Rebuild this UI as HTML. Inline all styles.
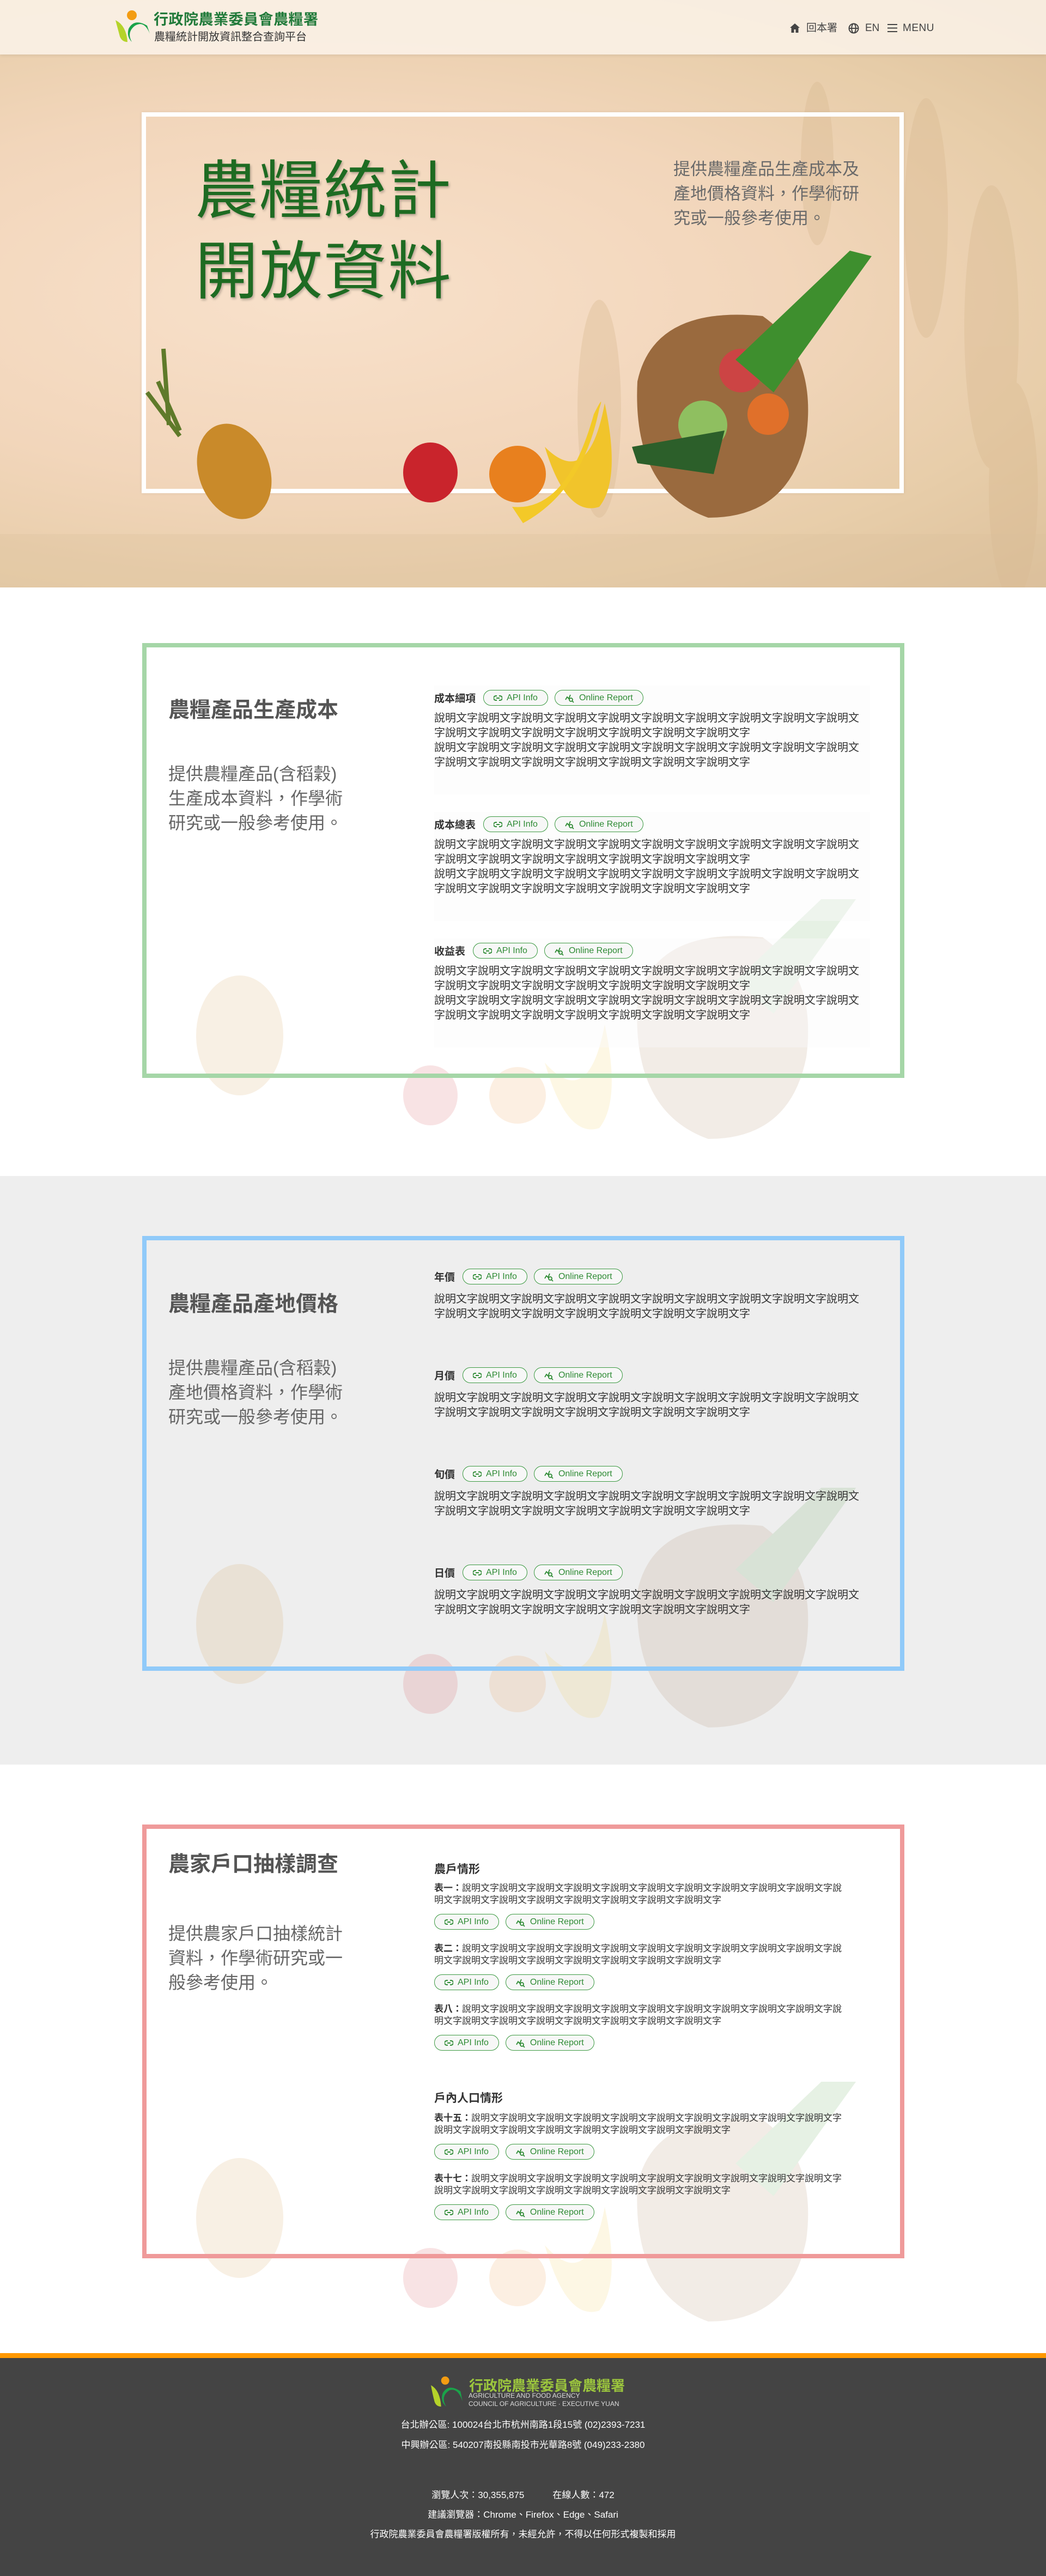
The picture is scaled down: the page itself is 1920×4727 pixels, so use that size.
<!DOCTYPE html>
<html><head><meta charset="utf-8">
<style>
*{margin:0;padding:0;box-sizing:border-box}
body{width:1920px;height:4727px;position:relative;font-family:"Liberation Sans","Noto Sans CJK TC",sans-serif;background:#fff;overflow:hidden}
.abs{position:absolute}
.hero{left:0;top:0;width:1920px;height:1078px;background:radial-gradient(ellipse at 30% 50%,#f8e1cb 0%,#f2d6bb 45%,#e7cda9 75%,#dcc09b 100%)}
.header{left:0;top:0;width:1920px;height:100px;background:rgba(252,243,234,.85);box-shadow:0 2px 6px rgba(0,0,0,.08)}
.frame{left:260px;top:206px;width:1399px;height:699px;border:8px solid #fff;box-shadow:0 0 6px rgba(0,0,0,.08)}
.htitle{left:358px;top:276px;font-size:116px;line-height:148px;color:#1e6b22;text-shadow:2px 3px 4px rgba(0,0,0,.25);letter-spacing:2px}
.hdesc{left:1236px;top:288px;font-size:31px;line-height:45px;color:#6a6a6a;width:360px}
.sec{left:0;width:1920px;height:1080px}
.box{left:261px;width:1399px;border:8px solid}
.stitle{position:absolute;left:40px;font-size:39px;font-weight:bold;color:#555}
.sdesc{position:absolute;left:40px;font-size:32px;line-height:45px;color:#666;width:330px}
.item{position:absolute;left:528px;width:800px;background:rgba(250,250,250,.4)}
.lbl{font-size:19px;font-weight:bold;color:#333;display:inline-block;vertical-align:middle;margin-right:14px}
.btn{display:inline-flex;align-items:center;height:29px;border:1.5px solid #3c9a42;border-radius:15px;color:#2e8b34;font-size:16px;padding:0 18px;vertical-align:middle;margin-right:12px;background:#f7f7f7;gap:8px;white-space:nowrap}
.txt{font-size:20px;line-height:27px;color:#333;width:780px}
.t2{font-size:17px;line-height:22px;color:#333;width:760px}
.sub{font-size:21px;font-weight:bold;color:#333}
.fade{opacity:.12}
.nav{position:absolute;top:40px;font-size:19px;color:#444;line-height:24px}
</style></head><body>

<div class="abs hero"></div>
<svg class="abs" style="left:0;top:100px" width="1920" height="978">
<g fill="#d8b88e" opacity=".35">
<ellipse cx="1700" cy="300" rx="40" ry="220"/><ellipse cx="1820" cy="500" rx="50" ry="260"/><ellipse cx="1500" cy="200" rx="30" ry="150"/><ellipse cx="1100" cy="650" rx="40" ry="200"/><ellipse cx="1860" cy="800" rx="45" ry="200"/>
</g>
<rect x="0" y="880" width="1920" height="98" fill="#d9bf9c" opacity=".3"/>
</svg>
<div class="abs frame"></div>
<div class="abs htitle">農糧統計<br>開放資料</div>
<div class="abs hdesc">提供農糧產品生產成本及產地價格資料，作學術研究或一般參考使用。</div>
<svg class="abs" style="left:0;top:0" width="1920" height="1078">
<g>
<path d="M300 640 L310 780 M290 700 L330 790 M270 720 L330 800" stroke="#5f7a2a" stroke-width="8"/>
<ellipse cx="430" cy="865" rx="65" ry="90" fill="#c98a2a" transform="rotate(-20 430 865)"/>
<ellipse cx="790" cy="867" rx="50" ry="55" fill="#c9242c"/>
<circle cx="950" cy="870" r="52" fill="#e8801e"/>
<path d="M1000 820 Q1040 950 1100 930 Q1140 880 1110 740 Q1080 900 1000 820Z" fill="#f1c42b"/>
<path d="M940 930 Q1040 940 1090 760 Q1110 720 1100 750 Q1070 900 960 960Z" fill="#f3c928"/>
<path d="M1170 700 Q1200 560 1400 580 Q1500 650 1480 800 Q1450 950 1300 950 Q1160 900 1170 700Z" fill="#9a6a3e"/>
<circle cx="1360" cy="680" r="40" fill="#c44"/><circle cx="1410" cy="760" r="38" fill="#e0702a"/><circle cx="1290" cy="780" r="45" fill="#8fbf60"/>
<path d="M1350 660 L1560 460 L1600 470 L1420 720Z" fill="#3e8f2e"/>
<path d="M1310 870 L1170 850 L1160 820 L1330 790Z" fill="#2c5f2a"/>
</g>
</svg>

<div class="abs header"></div>
<svg class="abs" style="left:210px;top:17px" width="66" height="62" viewBox="0 0 66 62">
<circle cx="32" cy="11" r="9" fill="#f39c12"/>
<path d="M2 20 Q22 30 24 60 Q14 60 10 50 Q6 35 2 20Z" fill="#b5d32a"/>
<path d="M65 45 Q55 20 38 30 Q22 42 32 60 Q22 50 26 36 Q36 16 60 30 Z" fill="#1aa34a"/>
</svg>
<div class="abs" style="left:282px;top:14px;font-size:27px;color:#217a3a;font-weight:bold;letter-spacing:.5px">行政院農業委員會農糧署</div>
<div class="abs" style="left:283px;top:51px;font-size:20px;color:#333">農糧統計開放資訊整合查詢平台</div>
<svg class="abs" style="left:1450px;top:43px" width="18" height="17" viewBox="0 0 18 17"><path d="M9 0 0 8h2.5v9h5v-6h3v6h5V8H18Z" fill="#444"/></svg>
<div class="nav" style="left:1480px">回本署</div>
<svg class="abs" style="left:1557px;top:42px" width="20" height="20" viewBox="0 0 20 20" fill="none" stroke="#444" stroke-width="2"><circle cx="10" cy="10" r="8.5"/><ellipse cx="10" cy="10" rx="3.8" ry="8.5"/><path d="M1.5 10h17"/></svg>
<div class="nav" style="left:1588px">EN</div>
<svg class="abs" style="left:1629px;top:44px" width="18" height="15" viewBox="0 0 18 15" fill="#444"><rect y="0" width="18" height="2"/><rect y="6.5" width="18" height="2"/><rect y="13" width="18" height="2"/></svg>
<div class="nav" style="left:1657px;letter-spacing:.5px">MENU</div>

<!-- SECTION 1 -->
<div class="abs sec" style="top:1078px;background:#fff"></div>
<svg class="abs fade" style="left:260px;top:1650px" width="1560" height="480">
<ellipse cx="180" cy="250" rx="80" ry="110" fill="#c98a2a"/>
<ellipse cx="530" cy="360" rx="50" ry="55" fill="#c9242c"/>
<circle cx="690" cy="360" r="52" fill="#e8801e"/>
<path d="M740 300 Q780 440 840 420 Q880 370 850 230 Q820 390 740 300Z" fill="#f1c42b"/>
<path d="M910 190 Q940 50 1140 70 Q1240 140 1220 290 Q1190 440 1040 440 Q900 390 910 190Z" fill="#9a6a3e"/>
<path d="M1090 150 L1300 -50 L1340 -40 L1160 210Z" fill="#3e8f2e"/>
</svg>
<div class="abs box" style="top:1180px;height:798px;border-color:#a5d6a7">
<div class="stitle" style="top:84px">農糧產品生產成本</div>
<div class="sdesc" style="top:210px">提供農糧產品(含稻穀)生產成本資料，作學術研究或一般參考使用。</div>
<div class="item" style="top:70px;height:200px">
<div style="margin-top:8px"><span class="lbl">成本細項</span><span class="btn"><svg width="16" height="12" viewBox="0 0 16 12" fill="none" stroke="#2e8b34" stroke-width="2"><path d="M6 2H4a4 4 0 0 0 0 8h2M10 2h2a4 4 0 0 1 0 8h-2M5 6h6"/></svg>API Info</span><span class="btn"><svg width="18" height="18" viewBox="0 0 18 18" fill="none" stroke="#2e8b34" stroke-width="1.8"><path d="M1 12 4 7 7 10 10 3"/><circle cx="11" cy="12" r="3"/><path d="M13 14l3 3"/></svg>Online Report</span></div>
<div class="txt" style="margin-top:10px">說明文字說明文字說明文字說明文字說明文字說明文字說明文字說明文字說明文字說明文字說明文字說明文字說明文字說明文字說明文字說明文字說明文字<br>說明文字說明文字說明文字說明文字說明文字說明文字說明文字說明文字說明文字說明文字說明文字說明文字說明文字說明文字說明文字說明文字說明文字</div>
</div>
<div class="item" style="top:302px;height:200px">
<div style="margin-top:8px"><span class="lbl">成本總表</span><span class="btn"><svg width="16" height="12" viewBox="0 0 16 12" fill="none" stroke="#2e8b34" stroke-width="2"><path d="M6 2H4a4 4 0 0 0 0 8h2M10 2h2a4 4 0 0 1 0 8h-2M5 6h6"/></svg>API Info</span><span class="btn"><svg width="18" height="18" viewBox="0 0 18 18" fill="none" stroke="#2e8b34" stroke-width="1.8"><path d="M1 12 4 7 7 10 10 3"/><circle cx="11" cy="12" r="3"/><path d="M13 14l3 3"/></svg>Online Report</span></div>
<div class="txt" style="margin-top:10px">說明文字說明文字說明文字說明文字說明文字說明文字說明文字說明文字說明文字說明文字說明文字說明文字說明文字說明文字說明文字說明文字說明文字<br>說明文字說明文字說明文字說明文字說明文字說明文字說明文字說明文字說明文字說明文字說明文字說明文字說明文字說明文字說明文字說明文字說明文字</div>
</div>
<div class="item" style="top:534px;height:200px">
<div style="margin-top:8px"><span class="lbl">收益表</span><span class="btn"><svg width="16" height="12" viewBox="0 0 16 12" fill="none" stroke="#2e8b34" stroke-width="2"><path d="M6 2H4a4 4 0 0 0 0 8h2M10 2h2a4 4 0 0 1 0 8h-2M5 6h6"/></svg>API Info</span><span class="btn"><svg width="18" height="18" viewBox="0 0 18 18" fill="none" stroke="#2e8b34" stroke-width="1.8"><path d="M1 12 4 7 7 10 10 3"/><circle cx="11" cy="12" r="3"/><path d="M13 14l3 3"/></svg>Online Report</span></div>
<div class="txt" style="margin-top:10px">說明文字說明文字說明文字說明文字說明文字說明文字說明文字說明文字說明文字說明文字說明文字說明文字說明文字說明文字說明文字說明文字說明文字<br>說明文字說明文字說明文字說明文字說明文字說明文字說明文字說明文字說明文字說明文字說明文字說明文字說明文字說明文字說明文字說明文字說明文字</div>
</div>
</div>

<!-- SECTION 2 -->
<div class="abs sec" style="top:2158px;background:#eeeeee"></div>
<svg class="abs fade" style="left:260px;top:2730px" width="1560" height="480">
<ellipse cx="180" cy="250" rx="80" ry="110" fill="#c98a2a"/>
<ellipse cx="530" cy="360" rx="50" ry="55" fill="#c9242c"/>
<circle cx="690" cy="360" r="52" fill="#e8801e"/>
<path d="M740 300 Q780 440 840 420 Q880 370 850 230 Q820 390 740 300Z" fill="#f1c42b"/>
<path d="M910 190 Q940 50 1140 70 Q1240 140 1220 290 Q1190 440 1040 440 Q900 390 910 190Z" fill="#9a6a3e"/>
<path d="M1090 150 L1300 -50 L1340 -40 L1160 210Z" fill="#3e8f2e"/>
</svg>
<div class="abs box" style="top:2268px;height:798px;border-color:#90caf9">
<div class="stitle" style="top:86px">農糧產品產地價格</div>
<div class="sdesc" style="top:212px">提供農糧產品(含稻穀)產地價格資料，作學術研究或一般參考使用。</div>
<div class="item" style="top:52px;background:transparent">
<div><span class="lbl">年價</span><span class="btn"><svg width="16" height="12" viewBox="0 0 16 12" fill="none" stroke="#2e8b34" stroke-width="2"><path d="M6 2H4a4 4 0 0 0 0 8h2M10 2h2a4 4 0 0 1 0 8h-2M5 6h6"/></svg>API Info</span><span class="btn"><svg width="18" height="18" viewBox="0 0 18 18" fill="none" stroke="#2e8b34" stroke-width="1.8"><path d="M1 12 4 7 7 10 10 3"/><circle cx="11" cy="12" r="3"/><path d="M13 14l3 3"/></svg>Online Report</span></div>
<div class="txt" style="margin-top:14px">說明文字說明文字說明文字說明文字說明文字說明文字說明文字說明文字說明文字說明文字說明文字說明文字說明文字說明文字說明文字說明文字說明文字</div>
</div>
<div class="item" style="top:233px;background:transparent">
<div><span class="lbl">月價</span><span class="btn"><svg width="16" height="12" viewBox="0 0 16 12" fill="none" stroke="#2e8b34" stroke-width="2"><path d="M6 2H4a4 4 0 0 0 0 8h2M10 2h2a4 4 0 0 1 0 8h-2M5 6h6"/></svg>API Info</span><span class="btn"><svg width="18" height="18" viewBox="0 0 18 18" fill="none" stroke="#2e8b34" stroke-width="1.8"><path d="M1 12 4 7 7 10 10 3"/><circle cx="11" cy="12" r="3"/><path d="M13 14l3 3"/></svg>Online Report</span></div>
<div class="txt" style="margin-top:14px">說明文字說明文字說明文字說明文字說明文字說明文字說明文字說明文字說明文字說明文字說明文字說明文字說明文字說明文字說明文字說明文字說明文字</div>
</div>
<div class="item" style="top:414px;background:transparent">
<div><span class="lbl">旬價</span><span class="btn"><svg width="16" height="12" viewBox="0 0 16 12" fill="none" stroke="#2e8b34" stroke-width="2"><path d="M6 2H4a4 4 0 0 0 0 8h2M10 2h2a4 4 0 0 1 0 8h-2M5 6h6"/></svg>API Info</span><span class="btn"><svg width="18" height="18" viewBox="0 0 18 18" fill="none" stroke="#2e8b34" stroke-width="1.8"><path d="M1 12 4 7 7 10 10 3"/><circle cx="11" cy="12" r="3"/><path d="M13 14l3 3"/></svg>Online Report</span></div>
<div class="txt" style="margin-top:14px">說明文字說明文字說明文字說明文字說明文字說明文字說明文字說明文字說明文字說明文字說明文字說明文字說明文字說明文字說明文字說明文字說明文字</div>
</div>
<div class="item" style="top:595px;background:transparent">
<div><span class="lbl">日價</span><span class="btn"><svg width="16" height="12" viewBox="0 0 16 12" fill="none" stroke="#2e8b34" stroke-width="2"><path d="M6 2H4a4 4 0 0 0 0 8h2M10 2h2a4 4 0 0 1 0 8h-2M5 6h6"/></svg>API Info</span><span class="btn"><svg width="18" height="18" viewBox="0 0 18 18" fill="none" stroke="#2e8b34" stroke-width="1.8"><path d="M1 12 4 7 7 10 10 3"/><circle cx="11" cy="12" r="3"/><path d="M13 14l3 3"/></svg>Online Report</span></div>
<div class="txt" style="margin-top:14px">說明文字說明文字說明文字說明文字說明文字說明文字說明文字說明文字說明文字說明文字說明文字說明文字說明文字說明文字說明文字說明文字說明文字</div>
</div>
</div>

<!-- SECTION 3 -->
<div class="abs sec" style="top:3238px;height:1078px;background:#fff"></div>
<svg class="abs fade" style="left:260px;top:3820px" width="1560" height="480">
<ellipse cx="180" cy="250" rx="80" ry="110" fill="#c98a2a"/>
<ellipse cx="530" cy="360" rx="50" ry="55" fill="#c9242c"/>
<circle cx="690" cy="360" r="52" fill="#e8801e"/>
<path d="M740 300 Q780 440 840 420 Q880 370 850 230 Q820 390 740 300Z" fill="#f1c42b"/>
<path d="M910 190 Q940 50 1140 70 Q1240 140 1220 290 Q1190 440 1040 440 Q900 390 910 190Z" fill="#9a6a3e"/>
<path d="M1090 150 L1300 -50 L1340 -40 L1160 210Z" fill="#3e8f2e"/>
</svg>
<div class="abs box" style="top:3348px;height:796px;border-color:#ef9a9a">
<div class="stitle" style="top:34px">農家戶口抽樣調查</div>
<div class="sdesc" style="top:170px">提供農家戶口抽樣統計資料，作學術研究或一般參考使用。</div>
<div class="item" style="top:58px;background:transparent">
<div class="sub">農戶情形</div>
<div class="t2" style="margin-top:10px"><b>表一：</b>說明文字說明文字說明文字說明文字說明文字說明文字說明文字說明文字說明文字說明文字說明文字說明文字說明文字說明文字說明文字說明文字說明文字說明文字</div>
<div style="margin-top:14px"><span class="btn"><svg width="16" height="12" viewBox="0 0 16 12" fill="none" stroke="#2e8b34" stroke-width="2"><path d="M6 2H4a4 4 0 0 0 0 8h2M10 2h2a4 4 0 0 1 0 8h-2M5 6h6"/></svg>API Info</span><span class="btn"><svg width="18" height="18" viewBox="0 0 18 18" fill="none" stroke="#2e8b34" stroke-width="1.8"><path d="M1 12 4 7 7 10 10 3"/><circle cx="11" cy="12" r="3"/><path d="M13 14l3 3"/></svg>Online Report</span></div>
<div class="t2" style="margin-top:24px"><b>表二：</b>說明文字說明文字說明文字說明文字說明文字說明文字說明文字說明文字說明文字說明文字說明文字說明文字說明文字說明文字說明文字說明文字說明文字說明文字</div>
<div style="margin-top:14px"><span class="btn"><svg width="16" height="12" viewBox="0 0 16 12" fill="none" stroke="#2e8b34" stroke-width="2"><path d="M6 2H4a4 4 0 0 0 0 8h2M10 2h2a4 4 0 0 1 0 8h-2M5 6h6"/></svg>API Info</span><span class="btn"><svg width="18" height="18" viewBox="0 0 18 18" fill="none" stroke="#2e8b34" stroke-width="1.8"><path d="M1 12 4 7 7 10 10 3"/><circle cx="11" cy="12" r="3"/><path d="M13 14l3 3"/></svg>Online Report</span></div>
<div class="t2" style="margin-top:24px"><b>表八：</b>說明文字說明文字說明文字說明文字說明文字說明文字說明文字說明文字說明文字說明文字說明文字說明文字說明文字說明文字說明文字說明文字說明文字說明文字</div>
<div style="margin-top:14px"><span class="btn"><svg width="16" height="12" viewBox="0 0 16 12" fill="none" stroke="#2e8b34" stroke-width="2"><path d="M6 2H4a4 4 0 0 0 0 8h2M10 2h2a4 4 0 0 1 0 8h-2M5 6h6"/></svg>API Info</span><span class="btn"><svg width="18" height="18" viewBox="0 0 18 18" fill="none" stroke="#2e8b34" stroke-width="1.8"><path d="M1 12 4 7 7 10 10 3"/><circle cx="11" cy="12" r="3"/><path d="M13 14l3 3"/></svg>Online Report</span></div>
</div>
<div class="item" style="top:478px;background:transparent">
<div class="sub">戶內人口情形</div>
<div class="t2" style="margin-top:12px"><b>表十五：</b>說明文字說明文字說明文字說明文字說明文字說明文字說明文字說明文字說明文字說明文字說明文字說明文字說明文字說明文字說明文字說明文字說明文字說明文字</div>
<div style="margin-top:14px"><span class="btn"><svg width="16" height="12" viewBox="0 0 16 12" fill="none" stroke="#2e8b34" stroke-width="2"><path d="M6 2H4a4 4 0 0 0 0 8h2M10 2h2a4 4 0 0 1 0 8h-2M5 6h6"/></svg>API Info</span><span class="btn"><svg width="18" height="18" viewBox="0 0 18 18" fill="none" stroke="#2e8b34" stroke-width="1.8"><path d="M1 12 4 7 7 10 10 3"/><circle cx="11" cy="12" r="3"/><path d="M13 14l3 3"/></svg>Online Report</span></div>
<div class="t2" style="margin-top:24px"><b>表十七：</b>說明文字說明文字說明文字說明文字說明文字說明文字說明文字說明文字說明文字說明文字說明文字說明文字說明文字說明文字說明文字說明文字說明文字說明文字</div>
<div style="margin-top:14px"><span class="btn"><svg width="16" height="12" viewBox="0 0 16 12" fill="none" stroke="#2e8b34" stroke-width="2"><path d="M6 2H4a4 4 0 0 0 0 8h2M10 2h2a4 4 0 0 1 0 8h-2M5 6h6"/></svg>API Info</span><span class="btn"><svg width="18" height="18" viewBox="0 0 18 18" fill="none" stroke="#2e8b34" stroke-width="1.8"><path d="M1 12 4 7 7 10 10 3"/><circle cx="11" cy="12" r="3"/><path d="M13 14l3 3"/></svg>Online Report</span></div>
</div>
</div>

<!-- FOOTER -->
<div class="abs" style="left:0;top:4318px;width:1920px;height:9px;background:#ff9800"></div>
<div class="abs" style="left:0;top:4327px;width:1920px;height:400px;background:#444"></div>
<svg class="abs" style="left:788px;top:4360px" width="64" height="58" viewBox="0 0 66 62">
<circle cx="30" cy="9" r="8" fill="#f39c12"/>
<path d="M2 18 Q20 28 22 60 Q12 60 9 50 Q5 35 2 18Z" fill="#b5d32a"/>
<path d="M64 50 Q55 22 38 28 Q20 40 32 60 Q20 50 25 34 Q36 14 60 30 Z" fill="#1aa34a"/>
</svg>
<div class="abs" style="left:861px;top:4358px;font-size:26px;color:#9bc53d;font-weight:bold">行政院農業委員會農糧署</div>
<div class="abs" style="left:860px;top:4389px;font-size:12px;line-height:15px;color:#ddd">AGRICULTURE AND FOOD AGENCY<br>COUNCIL OF AGRICULTURE · EXECUTIVE YUAN</div>
<div class="abs" style="left:0;top:4431px;width:1920px;text-align:center;font-size:17px;line-height:37px;color:#fff">台北辦公區: 100024台北市杭州南路1段15號 (02)2393-7231<br>中興辦公區: 540207南投縣南投市光華路8號 (049)233-2380</div>
<div class="abs" style="left:0;top:4561px;width:1920px;text-align:center;font-size:17px;line-height:36px;color:#fff">瀏覽人次：30,355,875 &nbsp; &nbsp; &nbsp; &nbsp; &nbsp; 在線人數：472<br>建議瀏覽器：Chrome、Firefox、Edge、Safari<br>行政院農業委員會農糧署版權所有，未經允許，不得以任何形式複製和採用</div>
</body></html>
